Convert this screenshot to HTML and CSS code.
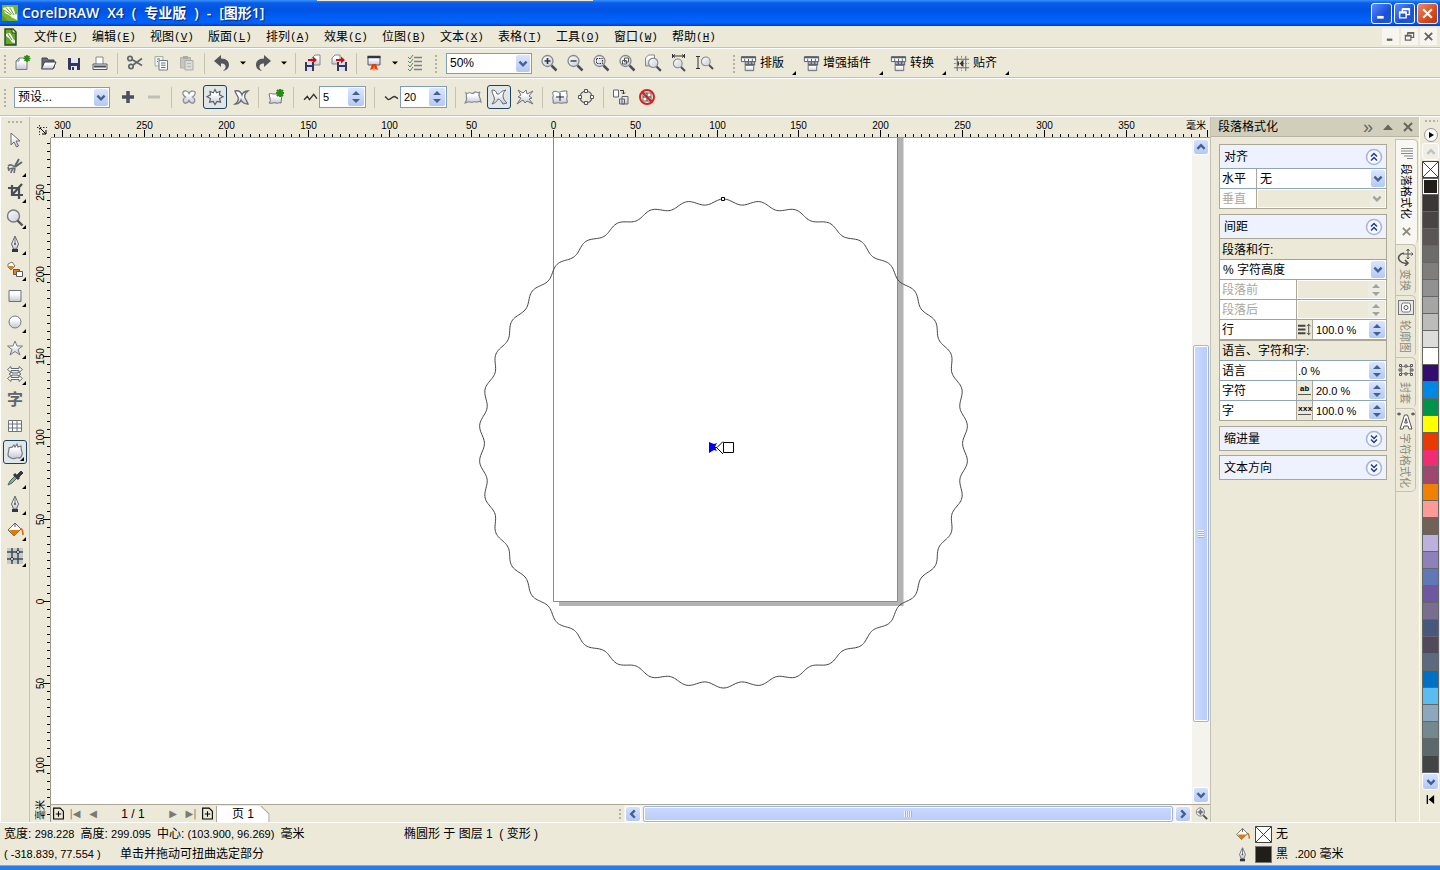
FILE: index.html
```html
<!DOCTYPE html>
<html lang="zh-CN">
<head>
<meta charset="utf-8">
<title>CorelDRAW X4 - [图形1]</title>
<link rel="stylesheet" href="styles.css">
</head>
<body>
<svg class="defs" aria-hidden="true">
  <defs>
    <linearGradient id="g" x1="0" y1="0" x2="0" y2="1"><stop offset=".3" stop-color="#fff"/><stop offset="1" stop-color="#c4c6d2"/></linearGradient>
    <linearGradient id="lens" x1="0" y1="0" x2="1" y2="1"><stop offset="0" stop-color="#fff"/><stop offset="1" stop-color="#c8ccd8"/></linearGradient>
    <symbol id="logo" viewBox="0 0 16 16"><rect width="16" height="16" fill="#79b52c"/><path d="M0 10l6 6H0z" fill="#5c9d20"/><path d="M1 3l5-1.500 2 1L11 2l3 9-3 2-4-3-4-2z" fill="#fff"/><path d="M4 2.500l6 7M2 5l7 5M8 3l4 7" stroke="#5f9d24" stroke-width="1"/><path d="M9 12l6-3v6z" fill="#f5f8ec"/></symbol>
    <symbol id="doc" viewBox="0 0 16 18"><path d="M3 1h8l3 3v13H3z" fill="#6ba632" stroke="#234c16" stroke-width="1.4"/><path d="M10 1v4h4" fill="#e4edcc" stroke="#234c16"/><path d="M4 6l4-1 4 7-2 2-3-4-3-2zM9 14l4-2v3z" fill="#fff"/><path d="M6 6l4 6" stroke="#4f8d20"/></symbol>
    <symbol id="chev" viewBox="0 0 10 10"><path d="M2 3.5l3 3 3-3" fill="none" stroke="#41618f" stroke-width="2"/></symbol>
    <symbol id="caret" viewBox="0 0 8 8"><path d="M1 2.500h6L4 5.500z"/></symbol>
    <symbol id="new" viewBox="0 0 20 20"><path d="M4 16.500V8l3-3h8v11.500z" fill="url(#g)" stroke="#777b88"/><path d="M4 8h3V5" fill="none" stroke="#777b88"/><path d="M15 2v7M11.500 5.500h7M12.500 3l5 5M17.500 3l-5 5" stroke="#278c12" stroke-width="1.700"/></symbol>
    <symbol id="open" viewBox="0 0 20 20"><path d="M4 15V5h5l1 2h6v8z" fill="#666a7b" stroke="#3b3e50"/><path d="M3.500 16l3-7H18l-3 7z" fill="url(#g)" stroke="#3b3e50"/></symbol>
    <symbol id="save" viewBox="0 0 20 20"><path d="M4 5h12v12H5l-1-1z" fill="#34365b"/><path d="M7 5h7v5H7zM7 13h6v4H7z" fill="#e5e6f1"/><path d="M9 14v3" stroke="#34365b" stroke-width="2"/></symbol>
    <symbol id="print" viewBox="0 0 20 20"><path d="M6 12V4h7v8" fill="#fff" stroke="#888"/><path d="M3 11h14v5.500H3z" fill="#f4f4f4" stroke="#555965"/><path d="M4 13.500h12" stroke="#4a4e5b" stroke-width="2"/></symbol>
    <symbol id="cut" viewBox="0 0 20 20"><g fill="none" stroke="#63666d" stroke-width="1.700"><circle cx="5" cy="5.500" r="2.200"/><circle cx="6" cy="13.500" r="2.200"/><path d="M7 6.500l10 6M8 12L17 5.500"/></g></symbol>
    <symbol id="copy" viewBox="0 0 20 20"><path d="M4 3.500h8V13H4z" fill="#eef3ee" stroke="#a3b0a8"/><path d="M8 7.500h8.500v9.500H8z" fill="#fff" stroke="#73788b"/><path d="M10 10h4.500M10 12.200h4.500M10 14.500h4.500M6 6h3M6 8.500h1" stroke="#5f7586"/></symbol>
    <symbol id="paste" viewBox="0 0 20 20"><path d="M3.500 4.500h10V15h-10z" fill="#c7c6bd" stroke="#b0b0aa"/><path d="M6 3h5v3H6z" fill="#aaa"/><path d="M8 7.500h8V17H8z" fill="#ddddd8" stroke="#aaa"/><path d="M10 10.500h4M10 13.500h4" stroke="#b8b8b5"/></symbol>
    <symbol id="undo" viewBox="0 0 20 20"><path d="M2 8l7-6v3.500c6 0 8 3 8 6.500s-3 5.500-6 6c2-2 3-3 2.500-5S11 10.500 9 10.500V14z" fill="#55565d"/></symbol>
    <symbol id="imp" viewBox="0 0 20 20"><path d="M9 9V5l3-3h5v10H9" fill="url(#g)" stroke="#83868f"/><path d="M2 9h9v9H2z" fill="#34365b"/><path d="M4 9h5v3H4zM4 14h5v4H4z" fill="#dddff0"/><path d="M5 6h5V3.500l4 3.500-4 3.500V8H5z" fill="#c41212"/></symbol>
    <symbol id="exp" viewBox="0 0 20 20"><path d="M3 11V5l3-3h5v9z" fill="url(#g)" stroke="#83868f"/><path d="M8 9h10v9H8z" fill="#34365b"/><path d="M10 9h6v3h-6zM10 14h6v4h-6z" fill="#dddff0"/><path d="M7 6h5V3.500L16 7l-4 3.500V8H7z" fill="#c41212"/></symbol>
    <symbol id="launch" viewBox="0 0 20 20"><path d="M4 3.500h12V12H4z" fill="url(#g)" stroke="#53586b"/><path d="M3.500 4h13" stroke="#303447" stroke-width="2.500"/><path d="M8 11h4l2 6-3-1-1 2-1-2-3 1z" fill="#e93e12"/><path d="M10 13l1 4H9z" fill="#ffb52c"/></symbol>
    <symbol id="opts" viewBox="0 0 20 20"><path d="M9 4.500h8M9 8.500h8M9 12.500h8M9 16.500h8" stroke="#7d8085" stroke-width="1.300"/><path d="M3 4l2 2 3-4M3 8l2 2 3-4M3 12l2 2 3-4M3 16l2 2 3-4" fill="none" stroke="#4f8c56"/></symbol>
    <symbol id="mag" viewBox="0 0 20 20"><circle cx="8.500" cy="8" r="5.500" fill="url(#lens)" stroke="#858792" stroke-width="1.300"/><path d="M12.500 12.500l5 5" stroke="#4c4e57" stroke-width="2.500"/></symbol>
    <symbol id="zin" viewBox="0 0 20 20"><use href="#mag"/><path d="M8.500 5v6M5.500 8h6" stroke="#35363f" stroke-width="1.700"/></symbol>
    <symbol id="zout" viewBox="0 0 20 20"><use href="#mag"/><path d="M5.500 8h6" stroke="#55565f" stroke-width="1.700"/></symbol>
    <symbol id="zsel" viewBox="0 0 20 20"><use href="#mag"/><path d="M5.500 5.500h6v5h-6z" fill="none" stroke="#333" stroke-dasharray="1.500 1"/></symbol>
    <symbol id="zall" viewBox="0 0 20 20"><use href="#mag"/><path d="M7.500 5h4v4h-4zM5.500 7.500h4v3.500h-4z" fill="#fff" stroke="#555"/></symbol>
    <symbol id="nav" viewBox="0 0 20 20"><use href="#mag"/><path d="M8.500 4v8M4.500 8h8" stroke="#555"/><circle cx="8.500" cy="8" r="2" fill="none" stroke="#555"/></symbol>
    <symbol id="zpage" viewBox="0 0 20 20"><path d="M2.500 13V5l3-3h6v11z" fill="url(#g)" stroke="#888"/><g transform="translate(3 3) scale(.85)"><use href="#mag" width="20" height="20"/></g></symbol>
    <symbol id="zw" viewBox="0 0 20 20"><path d="M3.500 1v4M15.500 1v4M4 3h11M6 1.500L4 3l2 1.500M13 1.500L15 3l-2 1.500" fill="none" stroke="#333"/><g transform="translate(2 4) scale(.8)"><use href="#mag" width="20" height="20"/></g></symbol>
    <symbol id="zh" viewBox="0 0 20 20"><path d="M1 3.500h4M1 15.500h4M3 4v11" fill="none" stroke="#333"/><g transform="translate(4 2) scale(.8)"><use href="#mag" width="20" height="20"/></g></symbol>
    <symbol id="macro" viewBox="0 0 20 20"><path d="M2.500 3h15v5h-15z" fill="#fff" stroke="#555b6d"/><path d="M2.500 3.500h15" stroke="#555b6d" stroke-width="2"/><path d="M6 5v3M10 5v3M14 5v3" stroke="#555b6d"/><path d="M6 8h11v4H6z" fill="#5e6475"/><path d="M7 9.500h2M10.500 9.500h2M14 9.500h2" stroke="#fff"/><path d="M6.500 12h9v5.500h-9z" fill="url(#g)" stroke="#666b7c"/></symbol>
    <symbol id="snap" viewBox="0 0 20 20"><path d="M5.500 2v16M14.500 2v16M2 5.500h16M2 14.500h16" stroke="#62656c"/><path d="M10 2v16M2 10h16" stroke="#888" stroke-dasharray="2 1"/><path d="M12 6v8l-4-4z" fill="#333"/><path d="M6.500 8v4" stroke="#333" stroke-width="1.500"/></symbol>
    <symbol id="plus" viewBox="0 0 20 20"><path d="M10 4v12M4 10h12" stroke="#4b4e5c" stroke-width="3.500"/></symbol>
    <symbol id="minus" viewBox="0 0 20 20"><path d="M4 10h12" stroke="#bfbeb7" stroke-width="3"/></symbol>
    <symbol id="pucker" viewBox="0 0 20 20"><path d="M10 6.500C11 4 14 3.500 15.500 4.500s.5 4-2 5.500c2.500 1.500 3 4 1.500 5.500s-4 .5-5-2c-1 2.500-3.500 3.500-5 2s-1-4 1.500-5.500C4 8.500 3 6 4.500 4.500s4.500-.5 5.500 2z" fill="url(#g)" stroke="#858792" stroke-width="1.200"/></symbol>
    <symbol id="zipper" viewBox="0 0 20 20"><path d="M10 2.500l1.600 3.200L15 4.500l-.6 3.400 3.600 1.900-3.400 1.700.9 3.700-3.500-.8L10 17.500l-1.800-3.100-3.600.8.900-3.700L2 9.800l3.500-1.900L5 4.500l3.400 1.200z" fill="url(#g)" stroke="#5e606b" stroke-width="1.200"/></symbol>
    <symbol id="twist" viewBox="0 0 20 20"><path d="M4 4c4-1 6 1 7 4 1-3 3-4 6-4-3 2-4 4-3 7 1 2 2 3 3 6-4 0-6-2-7-4-1 3-3 4-6 4 3-2 4-4 3-7C6 8 5 7 4 4z" fill="url(#g)" stroke="#666974" stroke-width="1.300"/></symbol>
    <symbol id="add" viewBox="0 0 20 20"><path d="M3 7c2-1 3 0 5 0h8l-1 9c-2-1-3 1-5 0s-4 1-7 0c2-2 1-3 1-5z" fill="url(#g)" stroke="#6d707c"/><path d="M14 2v8M10 6h8M11 3l6 6M17 3l-6 6" stroke="#278c12" stroke-width="2.200"/></symbol>
    <symbol id="amp" viewBox="0 0 14 12"><path d="M1 8l3-3 2 3 4-5 3 4" fill="none" stroke="#333" stroke-width="1.300"/></symbol>
    <symbol id="freq" viewBox="0 0 14 12"><path d="M1 5l3 3c3 0 3-3 6-3l3 2" fill="none" stroke="#333" stroke-width="1.300"/></symbol>
    <symbol id="r1" viewBox="0 0 20 20"><path d="M3 6c2 1 3-1 5 0s3 0 4-1 3 2 5 0c-2 3-1 4-.5 5s1 2 1.500 5c-3-2-3 1-5 0s-4 1-6 0-3 1-5 1c2-3 2-4 1.500-5.500S4 8 3 6z" fill="url(#g)" stroke="#858792" stroke-width="1.200"/></symbol>
    <symbol id="r2" viewBox="0 0 20 20"><path d="M3 3c3 0 4 1 5 4 3 1 4-3 6-3l3-1c-2 2-3 3-3 6s2 5 4 7l-4 1c-2-3-3-5-5-5-1 2-2 4-6 5 2-3 3-4 2-7S3 6 3 3z" fill="url(#g)" stroke="#656873"/></symbol>
    <symbol id="r3" viewBox="0 0 20 20"><path d="M3 3l5 3 3-3 1 4 6-3-4 5 3 2-3 1 4 5-6-3-2 2-2-3-6 4 4-6-3-1 3-2z" fill="url(#g)" stroke="#6e717c"/></symbol>
    <symbol id="center" viewBox="0 0 20 20"><path d="M3 5c3-2 5 1 7 0s5-1 7-1c-1 3 1 4 0 6s1 4 0 6c-3-1-5 1-7 0s-5 1-7 0c1-3-1-4 0-6s-1-3 0-5z" fill="url(#g)" stroke="#6e717c"/><path d="M10 6v8M6 10h8" stroke="#222"/></symbol>
    <symbol id="curves" viewBox="0 0 20 20"><circle cx="10" cy="10" r="6" fill="none" stroke="#666974" stroke-width="1.200"/><g fill="#fff" stroke="#555"><path d="M8.500 2.500h3v3h-3zM8.500 14.500h3v3h-3zM2.500 8.500h3v3h-3zM14.500 8.500h3v3h-3z"/></g></symbol>
    <symbol id="cprop" viewBox="0 0 20 20"><path d="M2.500 3h5v7h-5zM11 9.500h6V17h-6zM8.500 12h5v5h-5z" fill="url(#g)" stroke="#62656f"/><path d="M9 3.500h3.500V7M11 5.500L12.500 7 14 5.500" fill="none" stroke="#333"/></symbol>
    <symbol id="clear" viewBox="0 0 20 20"><path d="M6 6h8v8H6z" fill="#fff" stroke="#666"/><path d="M10 6v8M6 10h8" stroke="#333"/><circle cx="10" cy="10" r="7" fill="none" stroke="#d42222" stroke-width="2"/><path d="M5 5l10 10" stroke="#d42222" stroke-width="2.200"/></symbol>
    <symbol id="tri" viewBox="0 0 5 5"><path d="M5 0v5H0z"/></symbol>
    <symbol id="pick" viewBox="0 0 20 20"><path d="M6 3v12l3-3 2.500 5 2-1L11 11h4z" fill="url(#g)" stroke="#696b78"/></symbol>
    <symbol id="shape" viewBox="0 0 20 20"><path d="M17 6l-7 5M14 3l-4 7" stroke="#62646f" stroke-width="2"/><path d="M3 10c3-2 4-1 7 1M4 13c2-1 3 0 5-1M6 17c0-2 1-3 2-4M9 17l1-5M3 11l1 4" fill="none" stroke="#696c77" stroke-width="1.600"/></symbol>
    <symbol id="crop" viewBox="0 0 20 20"><path d="M7 3v10h11M3 6h11v11M17 2L7 13" fill="none" stroke="#4b4c57" stroke-width="2.200"/></symbol>
    <symbol id="zoomt" viewBox="0 0 20 20"><circle cx="8.500" cy="8" r="6" fill="url(#lens)" stroke="#777a84" stroke-width="1.400"/><path d="M12.500 12.500l5 5" stroke="#555" stroke-width="2.400"/></symbol>
    <symbol id="pen" viewBox="0 0 20 20"><path d="M10 2l3.500 8-2 5h-3l-2-5z" fill="url(#g)" stroke="#656873"/><path d="M10 3v7" stroke="#656873"/><circle cx="10" cy="10" r="1" fill="#555"/><path d="M7 15h6v3H7z" fill="#333641"/></symbol>
    <symbol id="smart" viewBox="0 0 20 20"><path d="M3 4l4-2 3 4-4 4-3-3z" fill="#fff" stroke="#777"/><path d="M3 6h6l-3 4z" fill="#d9821c"/><path d="M8.500 9.500h6v5h-6z" fill="#df861d" stroke="#555863"/><path d="M11.500 11.500h6v5h-6z" fill="#fff" stroke="#555863"/></symbol>
    <symbol id="rect" viewBox="0 0 20 20"><path d="M4 4.500h12v11H4z" fill="url(#g)" stroke="#6e7079"/></symbol>
    <symbol id="ell" viewBox="0 0 20 20"><circle cx="10" cy="10" r="6" fill="url(#g)" stroke="#777985"/></symbol>
    <symbol id="star" viewBox="0 0 20 20"><path d="M10 3l2 5h5.500l-4.500 3.500 2 5.500-5-3.500L5 17l2-5.500L2.500 8H8z" fill="url(#g)" stroke="#777985"/></symbol>
    <symbol id="arrows" viewBox="0 0 20 20"><path d="M2.500 5.500L6 2.500v2h8v-2l3.500 3-3.500 3v-2H6v2zM4 10l3-2v1h6V8l3 2-3 2v-1H7v1zM2.500 14.500l3.500-3v2h8v-2l3.500 3-3.500 3v-2H6v2z" fill="#fff" stroke="#666974"/></symbol>
    <symbol id="table" viewBox="0 0 20 20"><path d="M3.500 4.500h13v11h-13zM7.500 4.500v11M12 4.500v11M3.500 8h13M3.500 12h13" fill="#fff" stroke="#70727e"/></symbol>
    <symbol id="blend" viewBox="0 0 20 20"><path d="M4 6c2-2 3 1 4-2l1-1 1 2 2-3 1 3 3-1c0 3 0 4 1 6s0 3-1 5-3 0-5 1-3 1-5 0-3-1-3-3 1-4 1-7z" fill="url(#g)" stroke="#777985" stroke-width="1.200"/></symbol>
    <symbol id="drop" viewBox="0 0 20 20"><path d="M3 17l2-4 5-5 2 2-5 5z" fill="#8eac94" stroke="#496353"/><path d="M9 6l5 5" stroke="#343844" stroke-width="3"/><path d="M12 7l4-4 2 2-4 4z" fill="#343844" stroke="#343844"/></symbol>
    <symbol id="fill" viewBox="0 0 20 20"><path d="M3 10l7-7 6 6-7 7z" fill="#fff" stroke="#62646e"/><path d="M4 10h11l-6 6z" fill="#df7c00"/><path d="M10 3v4" stroke="#555"/><path d="M15 9c2-1 3 2 3 6" fill="none" stroke="#d16e18" stroke-width="1.600"/></symbol>
    <symbol id="mesh" viewBox="0 0 20 20"><rect x="2" y="2" width="16" height="16" fill="#c6ccca"/><path d="M2 6h16M2 13h16M7 2v16M13 2v16" stroke="#424b51" stroke-width="1.500"/><circle cx="13" cy="6" r="1.500" fill="#fff" stroke="#333"/><circle cx="7" cy="13" r="1.500" fill="#fff" stroke="#333"/></symbol>
    <symbol id="dbl" viewBox="0 0 18 18"><circle cx="9" cy="9" r="7.500" fill="#f7f9ff" stroke="#a6b6dc" stroke-width="1.600"/><path d="M6 8.500l3-3 3 3M6 12.500l3-3 3 3" fill="none" stroke="#1d3d86" stroke-width="1.500"/></symbol>
    <symbol id="none" viewBox="0 0 18 18"><path d="M.5.5h17v17H.5z" fill="#fff" stroke="#333"/><path d="M1 1l16 16M17 1L1 17" stroke="#333"/></symbol>
    <symbol id="addpage" viewBox="0 0 12 12"><path d="M1.500 1v10h9V4l-3-3z" fill="none" stroke="#000"/><path d="M6 4v5M3.500 6.500h5" stroke="#000"/></symbol>
    <symbol id="restore" viewBox="0 0 12 12"><path d="M1.500 5h6v5h-6zM4 4.500V2h6.500v5H8" fill="none" stroke="currentColor" stroke-width="1.300"/><path d="M1 5h7M4 2h7" stroke="currentColor" stroke-width="2"/></symbol>
    <symbol id="x" viewBox="0 0 12 12"><path d="M2 2l8 8M10 2l-8 8" stroke="currentColor" stroke-width="2"/></symbol>
    <symbol id="min" viewBox="0 0 12 12"><path d="M2 9.500h6" stroke="currentColor" stroke-width="2.500"/></symbol>
    <symbol id="move" viewBox="0 0 18 18"><path d="M11 1v10M6 6h10M9.500 3L11 1l1.500 2M9.500 9.500L11 11l1.500-1.500M14.500 4.500L16 6l-1.500 1.500" fill="none" stroke="#555"/><path d="M7 5c-5 1-7 5-4 8s7 2 7 2M8 12l3 3-3 3" fill="none" stroke="#555" stroke-width="1.600"/></symbol>
    <symbol id="contour" viewBox="0 0 18 18"><rect x="1.500" y="1.500" width="15" height="14" fill="#e7e7ec" stroke="#777"/><rect x="4.500" y="4" width="9" height="9" rx="2" fill="#fff" stroke="#777"/><circle cx="9" cy="8.500" r="2" fill="none" stroke="#555"/></symbol>
    <symbol id="env" viewBox="0 0 18 18"><path d="M4 5c3 1 7 1 10 0-1 3-1 5 0 8-3-1-7-1-10 0 1-3 1-5 0-8z" fill="none" stroke="#777"/><path d="M2.500 3.500h2v2h-2zM8 4h2v2H8zM13.500 3.500h2v2h-2zM2.500 12.500h2v2h-2zM8 12h2v2H8zM13.500 12.500h2v2h-2zM2 8h2v2H2zM14 8h2v2h-2z" fill="#fff" stroke="#555"/></symbol>
    <symbol id="achar" viewBox="0 0 18 18"><path d="M3 17L7.500 3h3L15 17h-3l-1-3H7l-1 3zM7.700 11h2.600L9 6.500z" fill="#fff" stroke="#555"/><path d="M0 2h4M14 2h4M2 .5v3M16 .5v3" stroke="#333"/></symbol>
    <symbol id="para" viewBox="0 0 14 14"><path d="M1 1.500h12M1 4h12M1 6.500h12M4 9h9M7 11.500h6" stroke="#85888f"/></symbol>
  </defs>
</svg>

<header class="titlebar">
  <span class="behind"></span>
  <svg class="logo"><use href="#logo"/></svg>
  <h1><span>CorelDRAW</span><span>X4</span><span>(</span><span>专业版</span><span>)</span><span>-</span><span>[图形1]</span></h1>
  <button class="win" aria-label="最小化"><svg><use href="#min"/></svg></button>
  <button class="win" aria-label="还原"><svg><use href="#restore"/></svg></button>
  <button class="win close" aria-label="关闭"><svg><use href="#x"/></svg></button>
</header>

<nav class="menubar">
  <svg class="docicon"><use href="#doc"/></svg>
  <button>文件<i>(<u>F</u>)</i></button><button>编辑<i>(<u>E</u>)</i></button><button>视图<i>(<u>V</u>)</i></button><button>版面<i>(<u>L</u>)</i></button><button>排列<i>(<u>A</u>)</i></button><button>效果<i>(<u>C</u>)</i></button><button>位图<i>(<u>B</u>)</i></button><button>文本<i>(<u>X</u>)</i></button><button>表格<i>(<u>T</u>)</i></button><button>工具<i>(<u>O</u>)</i></button><button>窗口<i>(<u>W</u>)</i></button><button>帮助<i>(<u>H</u>)</i></button>
  <span class="mdi"><button aria-label="最小化文档"><svg><use href="#min"/></svg></button><button aria-label="还原文档"><svg><use href="#restore"/></svg></button><button aria-label="关闭文档"><svg><use href="#x"/></svg></button></span>
</nav>

<div class="toolbar standard">
  <span class="grip"></span>
  <button class="tb" aria-label="新建"><svg><use href="#new"/></svg></button><button class="tb" aria-label="打开"><svg><use href="#open"/></svg></button><button class="tb" aria-label="保存"><svg><use href="#save"/></svg></button><button class="tb" aria-label="打印"><svg><use href="#print"/></svg></button>
  <span class="sep"></span>
  <button class="tb" aria-label="剪切"><svg><use href="#cut"/></svg></button><button class="tb" aria-label="复制"><svg><use href="#copy"/></svg></button><button class="tb" aria-label="粘贴"><svg><use href="#paste"/></svg></button>
  <span class="sep"></span>
  <button class="tb" aria-label="撤消"><svg><use href="#undo"/></svg></button><button class="more" aria-label="撤消列表"><svg><use href="#caret"/></svg></button><button class="tb flip" aria-label="重做"><svg><use href="#undo"/></svg></button><button class="more" aria-label="重做列表"><svg><use href="#caret"/></svg></button>
  <span class="sep"></span>
  <button class="tb" aria-label="导入"><svg><use href="#imp"/></svg></button><button class="tb" aria-label="导出"><svg><use href="#exp"/></svg></button>
  <span class="sep"></span>
  <button class="tb" aria-label="启动器"><svg><use href="#launch"/></svg></button><button class="more" aria-label="启动器列表"><svg><use href="#caret"/></svg></button><button class="tb" aria-label="选项"><svg><use href="#opts"/></svg></button>
  <span class="grip mid"></span>
  <span class="combo zoomlevel"><select aria-label="缩放级别"><option>50%</option></select><svg class="arrow"><use href="#chev"/></svg></span>
  <button class="tb" aria-label="放大"><svg><use href="#zin"/></svg></button><button class="tb" aria-label="缩小"><svg><use href="#zout"/></svg></button><button class="tb" aria-label="缩放选定"><svg><use href="#zsel"/></svg></button><button class="tb" aria-label="缩放全部"><svg><use href="#zall"/></svg></button><button class="tb" aria-label="缩放页面"><svg><use href="#zpage"/></svg></button><button class="tb" aria-label="按页宽"><svg><use href="#zw"/></svg></button><button class="tb" aria-label="按页高"><svg><use href="#zh"/></svg></button>
  <span class="grip far"></span>
  <button class="macro"><svg><use href="#macro"/></svg>排版<svg class="tri"><use href="#tri"/></svg></button>
  <button class="macro"><svg><use href="#macro"/></svg>增强插件<svg class="tri"><use href="#tri"/></svg></button>
  <button class="macro"><svg><use href="#macro"/></svg>转换<svg class="tri"><use href="#tri"/></svg></button>
  <button class="macro"><svg><use href="#snap"/></svg>贴齐<svg class="tri"><use href="#tri"/></svg></button>
</div>

<div class="toolbar property">
  <span class="grip"></span>
  <span class="combo preset"><select aria-label="预设"><option>预设...</option></select><svg class="arrow"><use href="#chev"/></svg></span>
  <button class="tb" aria-label="添加预设"><svg><use href="#plus"/></svg></button><button class="tb" aria-label="删除预设"><svg><use href="#minus"/></svg></button>
  <span class="sep"></span>
  <button class="tb" aria-label="推拉变形"><svg><use href="#pucker"/></svg></button><button class="tb on" aria-label="拉链变形"><svg><use href="#zipper"/></svg></button><button class="tb" aria-label="扭曲变形"><svg><use href="#twist"/></svg></button>
  <span class="sep"></span>
  <button class="tb" aria-label="添加新的变形"><svg><use href="#add"/></svg></button>
  <span class="sep"></span>
  <label class="num"><svg><use href="#amp"/></svg><span class="spin"><input value="5" aria-label="振幅"><span class="ud"></span></span></label>
  <span class="sep"></span>
  <label class="num"><svg><use href="#freq"/></svg><span class="spin"><input value="20" aria-label="频率"><span class="ud"></span></span></label>
  <span class="sep"></span>
  <button class="tb" aria-label="随机变形"><svg><use href="#r1"/></svg></button><button class="tb on" aria-label="平滑变形"><svg><use href="#r2"/></svg></button><button class="tb" aria-label="局部变形"><svg><use href="#r3"/></svg></button>
  <span class="sep"></span>
  <button class="tb" aria-label="中心变形"><svg><use href="#center"/></svg></button><button class="tb" aria-label="转换为曲线"><svg><use href="#curves"/></svg></button>
  <span class="sep"></span>
  <button class="tb" aria-label="复制变形属性"><svg><use href="#cprop"/></svg></button><button class="tb" aria-label="清除变形"><svg><use href="#clear"/></svg></button>
</div>

<main class="workspace">
  <aside class="toolbox">
    <span class="hgrip"></span>
    <button class="tb" aria-label="挑选"><svg><use href="#pick"/></svg></button>
    <button class="tb fly" aria-label="形状"><svg><use href="#shape"/></svg></button>
    <button class="tb fly" aria-label="裁剪"><svg><use href="#crop"/></svg></button>
    <button class="tb fly" aria-label="缩放"><svg><use href="#zoomt"/></svg></button>
    <button class="tb fly" aria-label="手绘"><svg><use href="#pen"/></svg></button>
    <button class="tb fly" aria-label="智能填充"><svg><use href="#smart"/></svg></button>
    <button class="tb fly" aria-label="矩形"><svg><use href="#rect"/></svg></button>
    <button class="tb fly" aria-label="椭圆形"><svg><use href="#ell"/></svg></button>
    <button class="tb fly" aria-label="星形"><svg><use href="#star"/></svg></button>
    <button class="tb fly" aria-label="基本形状"><svg><use href="#arrows"/></svg></button>
    <button class="tb char">字</button>
    <button class="tb" aria-label="表格"><svg><use href="#table"/></svg></button>
    <button class="tb fly on" aria-label="变形"><svg><use href="#blend"/></svg></button>
    <button class="tb fly" aria-label="滴管"><svg><use href="#drop"/></svg></button>
    <button class="tb fly" aria-label="轮廓"><svg><use href="#pen"/></svg></button>
    <button class="tb fly" aria-label="填充"><svg><use href="#fill"/></svg></button>
    <button class="tb fly" aria-label="交互式填充"><svg><use href="#mesh"/></svg></button>
  </aside>

  <section class="view">
    <div class="corner"><svg viewBox="0 0 12 12"><path d="M1 3.500h10M3.500 1v10" stroke="#333" stroke-dasharray="1.500 1.500"/><path d="M4 4l6 6M10 6v4H6" fill="none" stroke="#000"/></svg></div>
    <svg class="ruler top" id="hruler"></svg>
    <svg class="ruler side" id="vruler"></svg>
    <svg class="canvas">
      <path d="M846.500 0h6v468H508v-4h338.500z" fill="#b3b3b3"/>
      <path d="M502.500 0v463.500h344V0" fill="#fff" stroke="#8b8b8b"/>
      <path id="rosette" fill="none" stroke="#444"/>
      <path d="M670.500 59.500h3v3h-3z" fill="#fff" stroke="#000"/>
      <path d="M658 304l5 2 3-1-2 4 2 4-3-1-5 3z" fill="#0000f0"/>
      <path d="M663 309.500h3l6-6M666 310l6 6" fill="none" stroke="#000"/>
      <path d="M672.500 304.500h10v10h-10z" fill="#fff" stroke="#000"/>
    </svg>
    <div class="scroll v"><button class="sb up" aria-label="向上滚动"><svg><use href="#chev"/></svg></button><span class="gap a"></span><span class="thumb"></span><span class="gap b"></span><button class="sb" aria-label="向下滚动"><svg><use href="#chev"/></svg></button></div>
    <div class="pages">
      <button aria-label="添加页面"><svg><use href="#addpage"/></svg></button>
      <button class="nav" aria-label="首页">|◀</button><button class="nav" aria-label="上一页">◀</button>
      <span class="count">1 / 1</span>
      <button class="nav" aria-label="下一页">▶</button><button class="nav" aria-label="末页">▶|</button>
      <button aria-label="在后面添加页面"><svg><use href="#addpage"/></svg></button>
      <button class="tab"><svg viewBox="0 0 53 16" preserveAspectRatio="none"><path d="M0 0h44l8.500 8V16H0z" fill="#fff"/><path d="M.5 0v16M44 0l8 8v8" fill="none" stroke="#aaa797"/></svg><span>页 1</span></button>
      <span class="grip mini"></span>
      <div class="scroll h"><button class="sb left" aria-label="向左滚动"><svg><use href="#chev"/></svg></button><span class="gap a"></span><span class="thumb"></span><span class="gap b"></span><button class="sb right" aria-label="向右滚动"><svg><use href="#chev"/></svg></button></div>
      <button class="navi" aria-label="导航器"><svg><use href="#nav"/></svg></button>
    </div>
  </section>

  <aside class="docker">
    <header><h2>段落格式化</h2><button>»</button><button aria-label="折叠"><svg viewBox="0 0 12 12"><path d="M1 9h10L6 3.500z" fill="#68665c"/></svg></button><button aria-label="关闭泊坞窗"><svg><use href="#x"/></svg></button></header>
    <div class="dbody">
      <form class="panel">
        <section>
          <button type="button" class="group">对齐<svg><use href="#dbl"/></svg></button>
          <div class="row short"><label for="hz">水平</label><span class="combo"><select id="hz"><option>无</option></select><svg class="arrow"><use href="#chev"/></svg></span></div>
          <div class="row short off"><label for="vt">垂直</label><span class="combo"><select id="vt" disabled><option></option></select><svg class="arrow"><use href="#chev"/></svg></span></div>
        </section>
        <section>
          <button type="button" class="group">间距<svg><use href="#dbl"/></svg></button>
          <label class="cap" for="unit">段落和行:</label>
          <div class="row"><span class="combo"><select id="unit"><option>% 字符高度</option></select><svg class="arrow"><use href="#chev"/></svg></span></div>
          <div class="row off"><label for="pb">段落前</label><span class="spin"><input id="pb" disabled><span class="ud"></span></span></div>
          <div class="row off"><label for="pa">段落后</label><span class="spin"><input id="pa" disabled><span class="ud"></span></span></div>
          <div class="row"><label for="ln">行</label><svg class="ri" viewBox="0 0 16 16"><path d="M1 4h8M1 8h8M1 12h8" stroke="#444" stroke-width="2"/><path d="M12.500 2v12M10.500 4.500l2-2 2 2M10.500 11.500l2 2 2-2" fill="none" stroke="#444"/></svg><span class="spin"><input id="ln" value="100.0 %"><span class="ud"></span></span></div>
          <p class="cap second">语言、字符和字:</p>
          <div class="row"><label for="lg">语言</label><span class="spin tight"><input id="lg" value=".0 %"><span class="ud"></span></span></div>
          <div class="row"><label for="ch">字符</label><span class="ri"><span>ab</span></span><span class="spin"><input id="ch" value="20.0 %"><span class="ud"></span></span></div>
          <div class="row"><label for="wd">字</label><span class="ri"><span>xxx</span></span><span class="spin"><input id="wd" value="100.0 %"><span class="ud"></span></span></div>
        </section>
        <section><button type="button" class="group shut">缩进量<svg><use href="#dbl"/></svg></button></section>
        <section><button type="button" class="group shut">文本方向<svg><use href="#dbl"/></svg></button></section>
      </form>
      <div class="tabs">
        <button class="current"><svg class="para"><use href="#para"/></svg><span>段落格式化</span><svg class="tx"><use href="#x"/></svg></button>
        <button><svg><use href="#move"/></svg><span>变换</span></button>
        <button><svg><use href="#contour"/></svg><span>轮廓图</span></button>
        <button><svg><use href="#env"/></svg><span>封套</span></button>
        <button class="last"><svg><use href="#achar"/></svg><span>字符格式化</span></button>
      </div>
    </div>
  </aside>

  <aside class="palette">
    <span class="hgrip"></span>
    <button class="flyout" aria-label="调色板菜单"><svg viewBox="0 0 14 14"><circle cx="7" cy="7" r="6.500" fill="#f8f8f4" stroke="#999"/><path d="M5 4v6l5-3z"/></svg></button>
    <button class="sb dim" aria-label="向上"><svg><use href="#chev"/></svg></button>
    <button class="nocolor" aria-label="无"><svg><use href="#none"/></svg></button>
    <button class="ink" aria-label="黑"></button>
    <div id="swatches"></div>
    <button class="sb" aria-label="向下"><svg><use href="#chev"/></svg></button>
    <button class="expand" aria-label="展开"><svg viewBox="0 0 10 12"><path d="M1.500 1v10" stroke="#000" stroke-width="1.500"/><path d="M9 1v10L3 6z"/></svg></button>
  </aside>
</main>

<footer class="status">
  <div class="info"><p><span>宽度: <span class="n">298.228</span></span><span>高度: <span class="n">299.095</span></span><span>中心: <span class="n">(103.900, 96.269)</span></span><span>毫米</span></p><p><span class="pos n">( -318.839, 77.554 )</span><span>单击并拖动可扭曲选定部分</span></p></div>
  <p class="object">椭圆形 于 图层 1&nbsp; ( 变形 )</p>
  <div class="ink-info"><p><svg><use href="#fill"/></svg><svg><use href="#none"/></svg>无</p><p><svg><use href="#pen"/></svg><b></b><span>黑&nbsp; <span class="n">.200</span> 毫米</span></p></div>
</footer>
<div class="taskbar"></div>
<script src="main.js"></script>
</body>
</html>
```
FILE: styles.css
```css
* { box-sizing: border-box; }
body {
  margin: 0;
  height: 100vh;
  display: flex;
  flex-direction: column;
  overflow: hidden;
  background: #ece9d8;
  color: #000;
  font: 12px/16px "Liberation Sans", "Noto Sans CJK SC", sans-serif;
}
h1, h2, p { margin: 0; font-weight: normal; }
button, input, select { font: inherit; color: inherit; border: 0; margin: 0; padding: 0; background: none; border-radius: 0; }
button { display: flex; align-items: center; justify-content: center; flex: none; }
svg { flex: none; }
.defs { position: absolute; width: 0; height: 0; }

.titlebar {
  position: relative;
  flex: none;
  height: 26px;
  display: flex;
  align-items: center;
  gap: 2px;
  padding: 0 2px 0 2px;
  background: linear-gradient(#3a92fc 0, #0a5ce8 3px, #0054e3 10px, #0062fc 20px, #0061f8 23px, #0038b8 26px);
  color: #fff;
}
.behind { position: absolute; left: 22%; top: 0; width: 276px; height: 1px; background: #ece9d8; }
.logo { width: 16px; height: 16px; }
.titlebar h1 {
  flex: 1;
  display: flex;
  gap: 8px;
  padding-left: 2px;
  font: 600 14px/20px "Open Sans", "Noto Sans CJK SC", sans-serif;
  text-shadow: 1px 1px 1px #0a246a;
}
.win { width: 21px; height: 21px; border: 1px solid #fff; border-radius: 3px; background: linear-gradient(135deg, #5b8df5, #1a4fdc 60%, #2458c8); }
.win svg { width: 13px; height: 13px; }
.win.close { background: linear-gradient(135deg, #ee8a6a, #d84a1c 60%, #b8380c); }

.menubar { flex: none; height: 22px; display: flex; align-items: center; border-bottom: 1px solid #c5c2b2; }
.docicon { width: 16px; height: 18px; margin: 0 16px 0 2px; }
.menubar > button { width: 58px; justify-content: flex-start; }
.menubar i { font: 11px/16px "Liberation Mono", monospace; }
.mdi { margin-left: auto; display: flex; gap: 2px; padding-right: 3px; color: #66645a; }
.mdi button { width: 17px; height: 17px; background: #f6f5ef; }
.mdi svg { width: 11px; height: 11px; }

.toolbar { flex: none; display: flex; align-items: center; padding-left: 3px; border-top: 1px solid #fff; border-bottom: 1px solid #c5c2b2; }
.standard { height: 30px; }
.property { height: 38px; }
.grip { width: 6px; height: 19px; background: radial-gradient(circle, #b5b2a4 1px, transparent 1px) 0 0 / 4px 4px repeat-y; }
.grip.mid { margin: 0 6px 0 6px; }
.grip.far { margin: 0 1px 0 14px; }
.sep { width: 9px; height: 21px; background: linear-gradient(#c5c2b2, #c5c2b2) center / 1px 100% no-repeat; }
.tb { position: relative; width: 26px; height: 26px; }
.tb svg { width: 20px; height: 20px; }
.tb.on { width: 24px; height: 24px; margin: 1px; border: 1px solid #1f4260; border-radius: 3px; background: #e0e7e8; }
.flip svg { transform: scaleX(-1); }
.more { width: 15px; height: 26px; }
.more svg { width: 8px; height: 8px; }
.combo { position: relative; display: flex; background: #fff; border: 1px solid #7f9db9; }
.combo select { appearance: none; flex: 1; width: 100%; padding: 0 18px 0 3px; outline: 0; opacity: 1; }
.arrow { position: absolute; right: 1px; top: 1px; bottom: 1px; width: 14px; height: calc(100% - 2px); padding: 1px; background: linear-gradient(#dbe5fd, #b4c8f6); border-radius: 2px; pointer-events: none; }
.zoomlevel { width: 86px; height: 21px; margin-right: 4px; }
.preset { width: 96px; height: 21px; margin: 0 5px 0 5px; }
.macro { position: relative; height: 26px; gap: 2px; padding-right: 12px; margin-right: 6px; }
.macro svg { width: 19px; height: 19px; }
.macro .tri { position: absolute; right: 0; bottom: 1px; width: 4px; height: 4px; }
.num { display: flex; align-items: center; gap: 1px; padding: 0 4px 0 5px; }
.num > svg { width: 15px; height: 13px; }
.num .spin { width: 47px; height: 22px; border: 1px solid #7f9db9; }
.num input { font-size: 12px; }
.spin { display: flex; background: #fff; padding: 1px; }
.spin input { flex: 1; width: 0; padding: 0 2px; outline: 0; }
.ud { width: 16px; border-radius: 2px; background: linear-gradient(#dbe5fd, #b4c8f6); display: flex; flex-direction: column; align-items: center; justify-content: center; gap: 4px; }
.ud::before, .ud::after { content: ""; border: 4px solid transparent; }
.ud::before { border-top: 0; border-bottom-color: #41618f; }
.ud::after { border-bottom: 0; border-top-color: #41618f; }

.workspace { flex: 1; min-height: 0; display: flex; border-top: 1px solid #fff; }
.toolbox { flex: none; width: 30px; padding: 1px 0 0 1px; border-right: 1px solid #c5c2b2; border-left: 1px solid #fff; }
.hgrip { display: block; height: 9px; margin: 0 5px; background: radial-gradient(circle, #b5b2a4 1px, transparent 1px) 0 2px / 4px 4px repeat-x; }
.fly::after { content: ""; position: absolute; right: 2px; bottom: 2px; border: 2px solid transparent; border-right-color: #000; border-bottom-color: #000; }
.char { color: #62646d; font-size: 16px; font-weight: bold; }

.view { flex: 1; min-width: 0; display: grid; grid-template: 21px 1fr 18px / 21px 1fr 18px; }
.corner { padding: 7px 0 0 6px; }
.corner svg { width: 12px; height: 12px; display: block; }
.ruler { width: 100%; height: 100%; font: 10px "Liberation Sans", "Noto Sans CJK SC", sans-serif; overflow: hidden; }
.top { grid-column: 2 / 4; border-bottom: 1px solid #9b998c; }
.side { grid-row: 2 / 4; border-right: 1px solid #9b998c; }
.ruler path { stroke: #000; }
.ruler text { text-anchor: middle; }
.canvas { width: 100%; height: 100%; background: #fff; overflow: hidden; }
.scroll { display: flex; background: #f4f3ee; }
.scroll.v { flex-direction: column; align-items: center; padding: 1px 0; }
.sb { width: 16px; height: 16px; border: 1px solid #fff; border-radius: 3px; background: linear-gradient(#d4e0fd, #b4c8f6); }
.sb svg { width: 12px; height: 12px; }
.sb.up svg, .sb.dim svg { transform: rotate(180deg); }
.sb.left svg { transform: rotate(90deg); }
.sb.right svg { transform: rotate(-90deg); }
.sb.dim { background: #f0eee4; }
.sb.dim svg { opacity: .3; }
.thumb { border: 1px solid #9bb4e8; outline: 1px solid #fff; outline-offset: -2px; border-radius: 2px; }
.v .thumb { width: 16px; flex: 376; background: repeating-linear-gradient(#eef3ff 0 1px, #9cb4ea 1px 2px) center / 6px 8px no-repeat, linear-gradient(90deg, #ccdafd, #b8cbfa); }
.v .a { flex: 191; }
.v .b { flex: 65; }
.pages { grid-column: 2 / 4; display: flex; align-items: center; border-top: 1px solid #aaa797; }
.pages > button svg { width: 13px; height: 13px; }
.pages > button { width: 15px; height: 16px; }
.pages .nav { width: 18px; color: #7c7a70; font: 10px/16px "DejaVu Sans", sans-serif; white-space: nowrap; }
.count { width: 62px; text-align: center; }
.pages .tab { position: relative; width: 54px; height: 16px; margin-left: 1px; }
.pages .tab svg { position: absolute; left: 0; top: 0; width: 100%; height: 100%; }
.tab span { position: relative; }
.grip.mini { margin-left: auto; height: 12px; }
.scroll.h { flex: 0 0 49%; align-items: center; height: 17px; padding: 0 1px; }
.h .thumb { height: 16px; flex: 523; background: repeating-linear-gradient(90deg, #eef3ff 0 1px, #9cb4ea 1px 2px) center / 8px 6px no-repeat, linear-gradient(#ccdafd, #b8cbfa); }
.h .a, .h .b { flex: 2; }
.pages .navi { width: 18px; }
.pages .navi svg { width: 15px; height: 15px; }

.docker { flex: none; width: 209px; display: flex; flex-direction: column; border-left: 1px solid #c5c2b2; }
.docker header { height: 20px; display: flex; align-items: center; padding: 0 1px 0 7px; background: #d1cebc; border-bottom: 1px solid #b8b5a5; color: #68665c; }
.docker h2 { flex: 1; color: #000; font-size: 12px; }
.docker header button { width: 20px; height: 18px; font-size: 18px; }
.docker header svg { width: 12px; height: 12px; }
.dbody { flex: 1; display: flex; }
.panel { flex: 1; padding: 7px 8px 0 8px; }
.panel section { margin-bottom: 5px; border: 1px solid #aaa797; }
.group { width: 100%; height: 23px; justify-content: space-between; padding: 0 3px 0 4px; background: #eef2fe; }
.group svg { width: 18px; height: 18px; }
.shut svg { transform: rotate(180deg); }
.panel section:nth-child(n+3) { margin-bottom: 4px; }
.row { display: flex; height: 20px; background: #fff; border-top: 1px solid #8fa5b8; }
.row label { width: 77px; padding: 2px; border-right: 1px solid #aaa797; }
.row.short label { width: 37px; }
.row .combo { flex: 1; border: 0; }
.row .spin { flex: 1; }
.ri { width: 16px; background: #ece9d8; border-right: 1px solid #aaa797; font: bold 8px/9px "Liberation Mono", monospace; text-align: center; }
.ri span { display: block; height: 14px; margin: 0 1px; padding-top: 3px; border-bottom: 1px solid #555; }
.spin input { font-size: 11px; }
.row .tight input { padding: 0; }
.off label { color: #aca899; }
.off .combo, .off .spin { background: #ece9d8; border: 1px solid #fff; }
.off .ud, .off .arrow { background: #f1efe5; opacity: .5; filter: grayscale(1); }
.cap { display: block; height: 21px; padding: 3px 2px 2px; border-top: 1px solid #aaa797; }
.cap.second { border-top-width: 2px; padding-top: 2px; }
.tabs { flex: none; width: 24px; border-left: 1px solid #c5c2b2; margin-top: 2px; }
.tabs button { width: 20px; padding: 3px 0 3px; flex-direction: column; gap: 3px; color: #8f8b7c; border: 1px solid #c5c2b2; border-left: 0; border-bottom-color: transparent; border-radius: 0 5px 5px 0; }
.tabs .current { width: 22px; color: #000; background: #f8f7f2; padding-top: 7px; }
.tabs .last { border-bottom-color: #c5c2b2; }
.tabs span { writing-mode: vertical-rl; text-orientation: sideways; font: 11px/16px "Noto Sans CJK SC", sans-serif; }
.tabs svg { width: 18px; height: 18px; }
.tabs .para { width: 14px; height: 14px; }
.tabs .tx { width: 11px; height: 11px; margin: 4px 0 3px; color: #8f8b7c; }

.palette { flex: none; width: 21px; display: flex; flex-direction: column; align-items: center; border-left: 1px solid #fff; padding-left: 1px; }
.palette .hgrip { width: 14px; margin: 0; }
.flyout { width: 16px; height: 17px; }
.flyout svg { width: 14px; height: 14px; }
.palette .sb { width: 17px; height: 17px; }
.nocolor { width: 18px; height: 18px; }
.nocolor svg { width: 17px; height: 17px; }
.ink { width: 17px; height: 17px; border: 1px solid #666; outline: 1px solid #fff; outline-offset: -2px; background: #211e1a; }
#swatches button { width: 17px; height: 17px; border: 1px solid #666; border-top: 0; }
.expand { height: 18px; }
.expand svg { width: 9px; height: 11px; }

.status { flex: none; height: 43px; display: flex; padding: 1px 4px; border-top: 1px solid #fff; }
.status p { display: flex; align-items: center; height: 20px; white-space: nowrap; }
.n { font-size: 11px; }
.info { width: 400px; }
.info p { gap: 6px; }
.info .pos { width: 110px; }
.object { flex: 1; }
.ink-info { width: 202px; }
.ink-info p { gap: 4px; }
.ink-info svg, .ink-info b { width: 17px; height: 17px; }
.ink-info b { background: #211e1a; border: 1px solid #777; }
.taskbar { flex: none; height: 5px; background: #2a7be4; border-top: 1px solid #8aa9c8; }
```
FILE: main.js
```js
const NS = 'http://www.w3.org/2000/svg';
const PX_PER_MM = 1.636;

function drawRuler(svg, vertical, origin, length) {
  let ticks = '';
  for (let mm = -400; mm <= 800; mm += 5) {
    const p = Math.round(origin + mm * PX_PER_MM) + 0.5;
    if (p < 0 || p > length) continue;
    const major = mm % 50 === 0;
    const from = major ? 13 : 17;
    ticks += vertical ? `M${from} ${p}H20` : `M${p} ${from}V20`;
    if (!major || p < 8 || p > length - 30) continue;
    const label = document.createElementNS(NS, 'text');
    label.textContent = Math.abs(mm);
    if (vertical) label.setAttribute('transform', `translate(14 ${p}) rotate(-90)`);
    else { label.setAttribute('x', p); label.setAttribute('y', 12); }
    svg.append(label);
  }
  const path = document.createElementNS(NS, 'path');
  path.setAttribute('d', ticks);
  svg.append(path);
  const unit = document.createElementNS(NS, 'text');
  unit.textContent = '毫米';
  if (vertical) unit.setAttribute('transform', `translate(14 ${length - 12}) rotate(-90)`);
  else { unit.setAttribute('x', length - 14); unit.setAttribute('y', 12); }
  svg.append(unit);
}

const h = document.getElementById('hruler');
const v = document.getElementById('vruler');
drawRuler(h, false, 502, h.getBoundingClientRect().width);
drawRuler(v, true, 463, v.getBoundingClientRect().height);

const points = [];
for (let i = 0; i < 1008; i++) {
  const a = i / 1008 * Math.PI * 2;
  const r = 241.8 + 2.7 * Math.cos(42 * a);
  points.push((672.5 + r * Math.sin(a)).toFixed(2) + ' ' + (305.5 - r * Math.cos(a)).toFixed(2));
}
document.getElementById('rosette').setAttribute('d', 'M' + points.join('L') + 'Z');

const colours = ['3a3734','4a4542','5b5654','6e6c6b','7f7e7d','929191','a5a5a4','bcbcbb','dcdcdb','ffffff','330d70','0089e4','00934a','ffff00','ea3a00','f02d72','9e4870','f08000','fa9b95','716258','bcb0dc','8e80b8','6078b8','7058a0','7a6e90','48587c','504a5c','5c6a80','0070c4','5cbcf0','8ca8bc','748890','5c686c','424446'];
const box = document.getElementById('swatches');
for (const c of colours) {
  const b = document.createElement('button');
  b.style.background = '#' + c;
  b.setAttribute('aria-label', '#' + c);
  box.append(b);
}
```
